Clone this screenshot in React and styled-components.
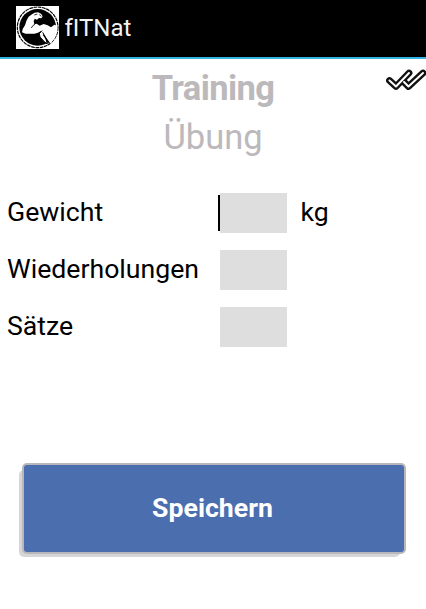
import React from "react";
import styled, { createGlobalStyle } from "styled-components";

const GlobalStyle = createGlobalStyle`
  * { box-sizing: border-box; }
  body { margin: 0; background: #fff; font-family: Roboto, sans-serif; }
`;
const Screen = styled.div`
  width: 426px;
  height: 609px;
  overflow: hidden;
  display: flex;
  flex-direction: column;
  background: #fff;
`;
const ActionBar = styled.header`
  height: 59px;
  flex: none;
  display: flex;
  align-items: flex-start;
  padding: 6px 0 0 16px;
  gap: 5.5px;
  background: #000;
  border-bottom: 2px solid #33b5e5;
`;
const AppName = styled.span`
  color: #f3f3f3;
  font-size: 24px;
  line-height: 28px;
  margin-top: 8px;
`;
const Heading = styled.section`
  height: 134px;
  flex: none;
  display: grid;
  grid-template-columns: 40px 1fr 40px;
  padding-top: 9px;
`;
const Titles = styled.div`
  grid-column: 2;
  display: flex;
  flex-direction: column;
  align-items: center;
  color: #bbb9bb;
`;
const Title = styled.h1`
  margin: 0;
  font-size: 34.5px;
  line-height: 40px;
  font-weight: 700;
  letter-spacing: -0.6px;
`;
const Subtitle = styled.h2`
  margin: 9px 0 0;
  font-size: 34.5px;
  line-height: 41px;
  font-weight: 400;
`;
const Form = styled.div`
  display: grid;
  grid-template-columns: 213px 67px auto;
  grid-auto-rows: 40px;
  row-gap: 17px;
  padding-left: 7px;
`;
const Label = styled.label`
  grid-column: 1;
  font-size: 26.67px;
  line-height: 38px;
  color: #000;
`;
const Field = styled.div`
  grid-column: 2;
  background: #dedede;
`;
const Caret = styled.span`
  display: block;
  width: 2px;
  height: 36px;
  margin: 2px 0 0 -2px;
  background: #000;
`;
const Unit = styled.span`
  grid-column: 3;
  padding-left: 13.5px;
  font-size: 26.67px;
  line-height: 38px;
`;
const SaveButton = styled.button`
  position: relative;
  width: 384px;
  height: 91px;
  margin: 116px 0 0 22px;
  padding: 0 3px 0 0;
  border: 2px solid transparent;
  background: none;
  color: #fff;
  font: 700 26.67px/87px Roboto, sans-serif;
  z-index: 0;
`;
const ButtonShadow = styled.span`
  position: absolute;
  z-index: -2;
  left: -5px;
  top: 5px;
  width: 381px;
  height: 87px;
  border-radius: 5px;
  background: #d6d6d6;
`;
const ButtonFace = styled.span`
  position: absolute;
  z-index: -1;
  inset: -2px;
  border: 2px solid #b9b7bb;
  border-radius: 5px;
  background: #4a6eae;
`;

const Logo = () => (
  <svg width="43" height="43" viewBox="18 12 129 129">
    <path d="M18 12h129v129H18z" fill="#fff" />
    <circle cx="83" cy="76" r="61" fill="none" stroke="#000" strokeWidth="3.5" strokeDasharray="11 2" />
    <circle cx="83" cy="76" r="55" fill="#000" />
    <path
      d="M66 37 74 32 84 31 93 35 98 43 94 49 87 48 81 53 74 50 71 58 73 67 80 65 89 71 101 66 113 70 123 76 133 68 142 71 142 90 135 108 120 126 109 113 99 98 93 87 84 92 73 95 60 95 47 95 36 91 38 81 45 70 50 55 56 44Z"
      fill="#fff"
    />
    <path d="M75 67Q68 69 64 78M88 38l6 5M73 39l9-3" fill="none" stroke="#000" strokeWidth="2.5" />
    <path d="M96 86 88 95 90 105 103 119 112 126 107 108 98 91" fill="#fff" stroke="#000" strokeWidth="3" />
    <path d="m100 98 19 27" fill="none" stroke="#000" strokeWidth="4" />
  </svg>
);

const DoubleCheck = () => (
  <svg width="40" height="24" viewBox="0 0 40 24" fill="none" strokeLinejoin="round" strokeLinecap="round">
    <path d="m3.5 12.5 6.5 6L23 5M18 14l4.5 4.5L37 5" stroke="#111" strokeWidth="6.8" />
    <path d="m3.5 12.5 6.5 6L23 5M18 14l4.5 4.5L37 5" stroke="#fff" strokeWidth="2" />
  </svg>
);

export default function App() {
  return (
    <>
      <GlobalStyle />
      <Screen>
        <ActionBar>
          <Logo />
          <AppName>fITNat</AppName>
        </ActionBar>
        <Heading>
          <Titles>
            <Title>Training</Title>
            <Subtitle>Übung</Subtitle>
          </Titles>
          <DoubleCheck />
        </Heading>
        <Form>
          <Label>Gewicht</Label>
          <Field><Caret /></Field>
          <Unit>kg</Unit>
          <Label>Wiederholungen</Label>
          <Field />
          <Label>Sätze</Label>
          <Field />
        </Form>
        <SaveButton>
          <ButtonShadow />
          <ButtonFace />
          Speichern
        </SaveButton>
      </Screen>
    </>
  );
}
